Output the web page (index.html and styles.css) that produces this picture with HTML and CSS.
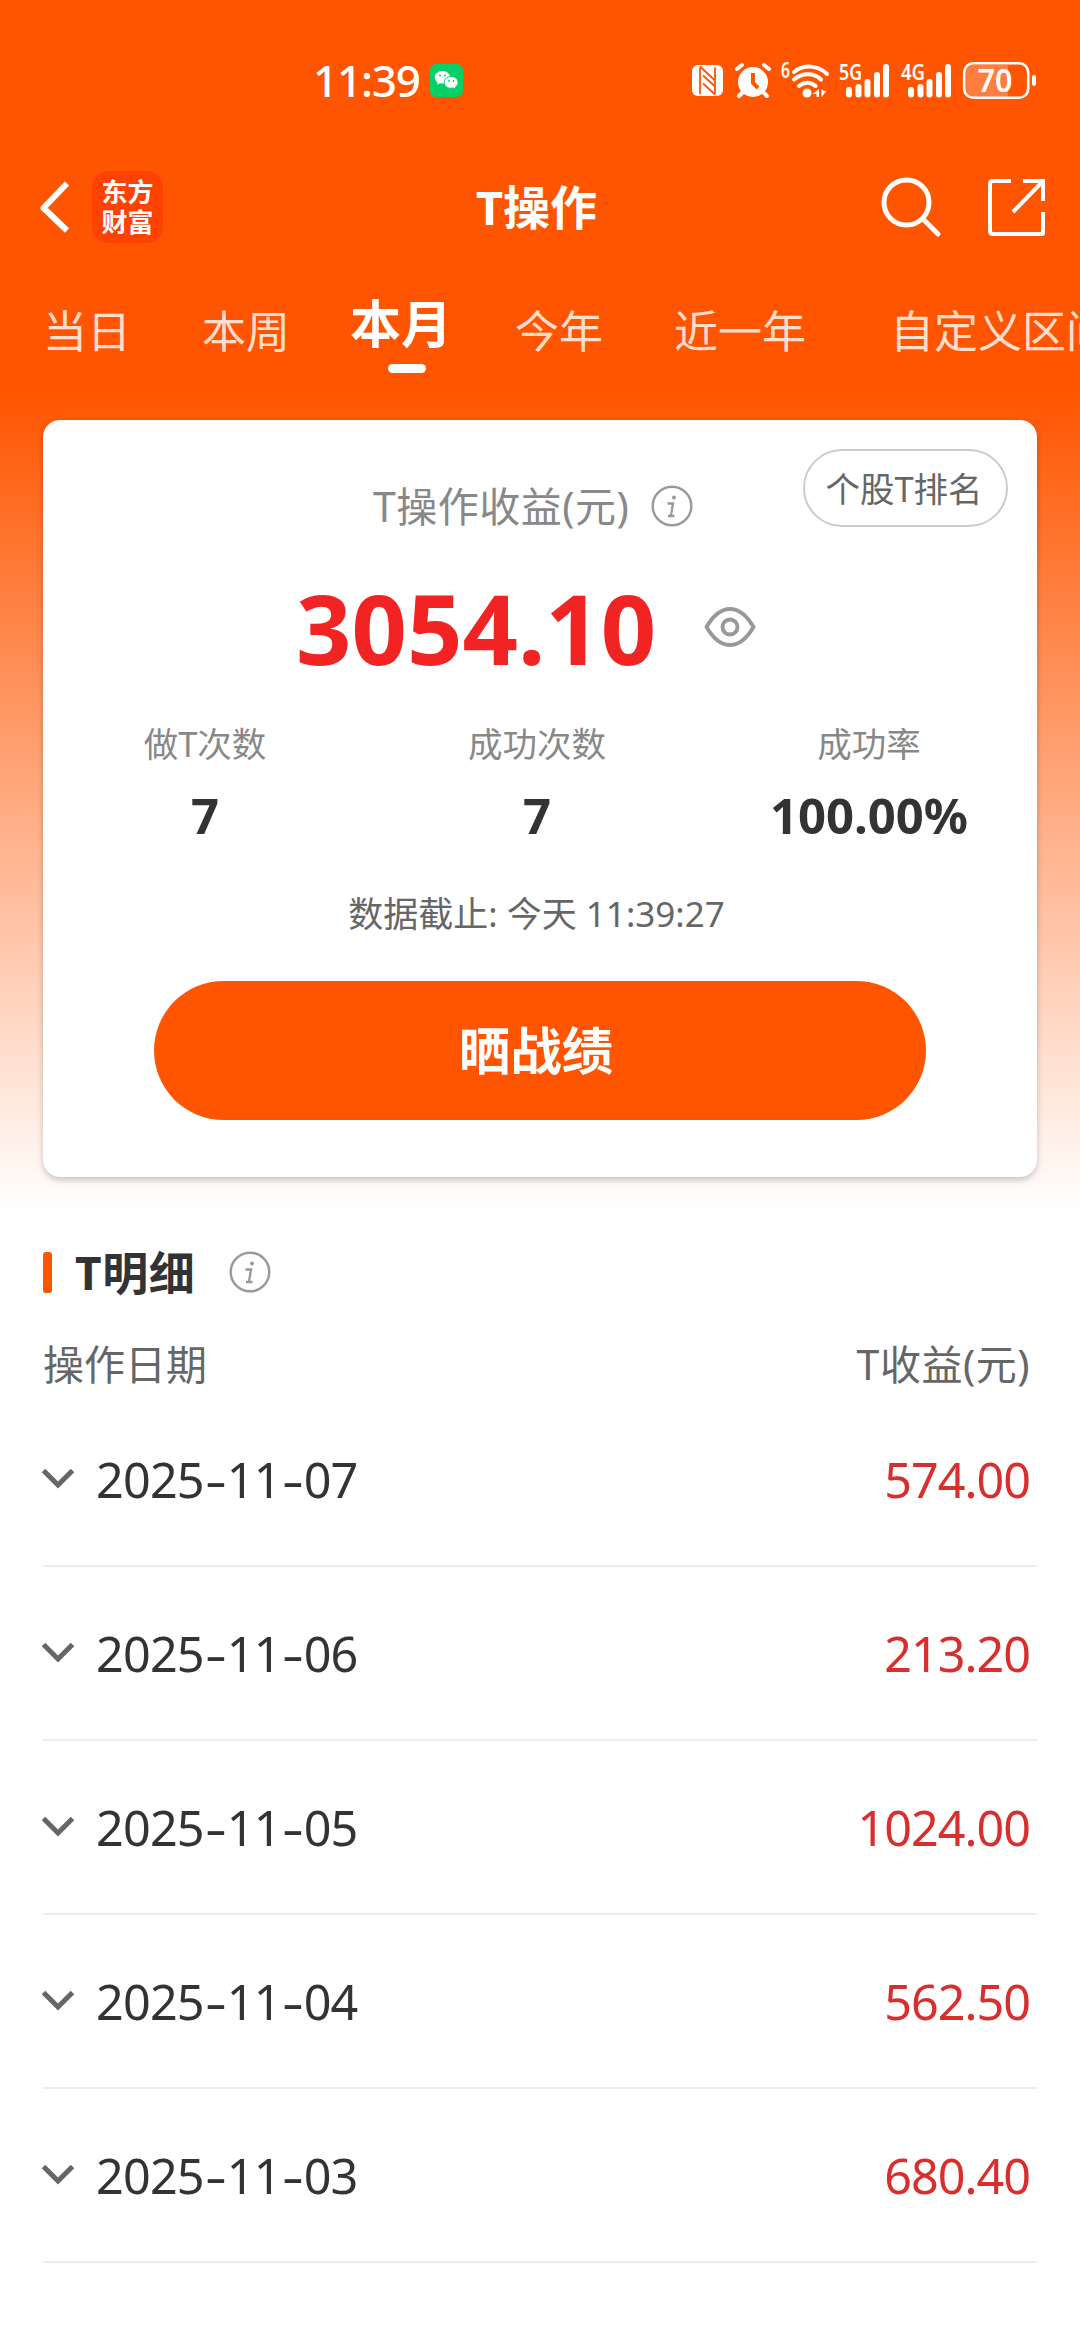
FILE: index.html
```html
<!DOCTYPE html>
<html lang="zh-CN">
<head>
<meta charset="utf-8">
<title>T操作</title>
<link rel="stylesheet" href="styles.css">
</head>
<body>
<div class="screen">
  <div class="status">
    <span class="time">11:39</span>
    <svg class="wechat" viewBox="0 0 33 33" width="33" height="33">
      <rect width="33" height="33" rx="6" fill="#07cf68"/>
      <path d="M12.500 7C8 7 4.800 9.900 4.800 13.400c0 2 1 3.700 2.700 4.900L7 20.800l2.900-1.500c.9.200 1.700.3 2.600.3 4.400 0 7.700-2.800 7.700-6.200S17 7 12.500 7z" fill="#fff"/>
      <path d="M21.200 12.500c-4 0-7 2.600-7 5.900s3 5.900 7 5.900c.8 0 1.600-.1 2.300-.3l2.400 1.200-.5-2.100c1.600-1.100 2.700-2.800 2.700-4.700 0-3.300-3-5.900-6.900-5.900z" fill="#fff" stroke="#07cf68" stroke-width="1"/>
      <g fill="#07cf68"><circle cx="10" cy="11.500" r="1"/><circle cx="15" cy="11.500" r="1"/><circle cx="19" cy="17" r=".9"/><circle cx="23.500" cy="17" r=".9"/></g>
    </svg>
    <svg class="sys" viewBox="0 0 350 40" width="350" height="40">
      <rect x="2" y="4" width="31" height="31" rx="6" fill="#fff"/>
      <g stroke="#ff5500" fill="none" stroke-width="1.800"><path d="M10 6.500V33"/><path d="M25 6.500V33"/><path d="M10 5.500l15 14"/><path d="M13 14.500l12 11"/><path d="M13 22.500l12 11"/></g>
      <circle cx="63" cy="21" r="15" fill="#fff"/>
      <g stroke="#fff" stroke-width="4" stroke-linecap="round"><path d="M47 8l5-4M79 8l-5-4M53 31l-4 4M73 31l4 4"/></g>
      <path d="M63 12v10l5 5" fill="none" stroke="#ff5500" stroke-width="4"/>
      <text x="91" y="17" class="gen" textLength="9" lengthAdjust="spacingAndGlyphs">6</text>
      <g fill="none" stroke="#fff" stroke-width="4" stroke-linecap="round"><path d="M104 11c10-8 24-7 33 2"/><path d="M104 18.500c8-7 20-7 27 0"/><path d="M109 25c5-4.500 12-4.500 16.500 0"/></g>
      <circle cx="117" cy="32" r="4.500" fill="#fff"/>
      <path d="M129 28v8h-2.500v-3h-4zM131.500 28v8l5-6h-2.500z" fill="#fff"/>
      <text x="149" y="19" class="gen" textLength="23" lengthAdjust="spacingAndGlyphs">5G</text>
      <g stroke="#fff" stroke-width="6" stroke-linecap="round"><path d="M159 29v4.500M168.500 26v7.500M177.500 21v12.500M187 14v19.500M196 6v27.500"/></g>
      <text x="211" y="19" class="gen" textLength="24" lengthAdjust="spacingAndGlyphs">4G</text>
      <g stroke="#fff" stroke-width="6" stroke-linecap="round"><path d="M221 29v4.500M230.500 26v7.500M239.500 21v12.500M249 14v19.500M258 6v27.500"/></g>
      <rect x="276" y="4" width="42" height="32" fill="#ff7d3e"/>
      <rect x="274.200" y="2.200" width="64" height="34.600" rx="9" fill="none" stroke="#fff" stroke-width="2.600"/>
      <rect x="342" y="14" width="4" height="11" rx="2" fill="#fff"/>
      <text x="287.500" y="31" class="pct" textLength="35" lengthAdjust="spacingAndGlyphs">70</text>
    </svg>
  </div>

  <div class="nav">
    <svg class="back" viewBox="0 0 32 54" width="32" height="54"><path d="M29 3.500L5.500 28 29 50.500" fill="none" stroke="#fff" stroke-width="6" stroke-linejoin="round"/></svg>
    <div class="logo"><span>东方</span><span>财富</span></div>
    <h1>T操作</h1>
    <svg class="search" viewBox="0 0 62 62" width="62" height="62"><g fill="none" stroke="#fff" stroke-width="5"><circle cx="26.500" cy="26.500" r="22.500"/><path d="M43 43l15 15" stroke-linecap="round"/></g></svg>
    <svg class="share" viewBox="0 0 60 60" width="60" height="60"><g fill="none" stroke="#fff" stroke-width="4"><path d="M25 4H7q-3 0-3 3v47q0 3 3 3h49q1 0 1-1V35"/><path d="M37 4h20v20M57 4L27 35"/></g></svg>
  </div>

  <div class="tabs">
    <span>当日</span><span>本周</span><span class="on">本月</span><span>今年</span><span class="wide">近一年</span><span>自定义区间</span>
  </div>

  <div class="card">
    <div class="rank">个股T排名</div>
    <div class="label"><span>T操作收益(元)</span>
      <svg class="info" viewBox="0 0 42 42" width="42" height="42"><circle cx="21" cy="21" r="19.300" fill="none" stroke="#999" stroke-width="2.400"/><circle cx="23" cy="12.500" r="2" fill="#999"/><path d="M16.500 18.500h5.500l-2 12M17 31h6.500" fill="none" stroke="#999" stroke-width="2.300"/></svg>
    </div>
    <div class="total"><b>3054.10</b>
      <svg viewBox="0 0 52 42" width="52" height="42"><g fill="none" stroke="#999" stroke-width="3.900"><path d="M2.500 21Q13 3 26 3t23.500 18Q39 39 26 39T2.500 21z" stroke-linejoin="round"/><circle cx="26" cy="21" r="7.500"/></g></svg>
    </div>
    <div class="stats">
      <div><span>做T次数</span><b>7</b></div>
      <div><span>成功次数</span><b>7</b></div>
      <div><span>成功率</span><b>100.00%</b></div>
    </div>
    <div class="asof">数据截止: 今天 11:39:27</div>
    <div class="btn">晒战绩</div>
  </div>

  <div class="section"><i></i><h2>T明细</h2>
    <svg class="info" viewBox="0 0 42 42" width="42" height="42"><circle cx="21" cy="21" r="19.300" fill="none" stroke="#999" stroke-width="2.400"/><circle cx="23" cy="12.500" r="2" fill="#999"/><path d="M16.500 18.500h5.500l-2 12M17 31h6.500" fill="none" stroke="#999" stroke-width="2.300"/></svg>
  </div>
  <div class="thead"><span>操作日期</span><span class="gain">T收益(元)</span></div>
  <div class="rows">
    <div class="row"><svg viewBox="0 0 34 24" width="34" height="24"><path d="M2.500 3.500L17 18 31.500 3.500" fill="none" stroke="#666" stroke-width="5"/></svg><span class="date">2025<i>-</i>11<i>-</i>07</span><span class="amt">574.00</span></div>
    <div class="row"><svg viewBox="0 0 34 24" width="34" height="24"><path d="M2.500 3.500L17 18 31.500 3.500" fill="none" stroke="#666" stroke-width="5"/></svg><span class="date">2025<i>-</i>11<i>-</i>06</span><span class="amt">213.20</span></div>
    <div class="row"><svg viewBox="0 0 34 24" width="34" height="24"><path d="M2.500 3.500L17 18 31.500 3.500" fill="none" stroke="#666" stroke-width="5"/></svg><span class="date">2025<i>-</i>11<i>-</i>05</span><span class="amt">1024.00</span></div>
    <div class="row"><svg viewBox="0 0 34 24" width="34" height="24"><path d="M2.500 3.500L17 18 31.500 3.500" fill="none" stroke="#666" stroke-width="5"/></svg><span class="date">2025<i>-</i>11<i>-</i>04</span><span class="amt">562.50</span></div>
    <div class="row"><svg viewBox="0 0 34 24" width="34" height="24"><path d="M2.500 3.500L17 18 31.500 3.500" fill="none" stroke="#666" stroke-width="5"/></svg><span class="date">2025<i>-</i>11<i>-</i>03</span><span class="amt">680.40</span></div>
  </div>
</div>
</body>
</html>
```
FILE: styles.css
```css
* { box-sizing: border-box; margin: 0; padding: 0; }
body { width: 1080px; background: #fff; font-family: "Noto Sans", "Noto Sans CJK SC", sans-serif; color: #333; }
svg { display: block; flex: none; overflow: visible; }
.screen {
  width: 1080px; height: 2340px; overflow: hidden;
  background: linear-gradient(#ff5500 0, #ff5500 390px, #fff 1210px);
}
.status { display: flex; align-items: center; height: 160px; padding-left: 313px; }
.time { width: 117px; font-size: 44px; line-height: 60px; font-weight: 500; color: #fff; white-space: nowrap; letter-spacing: -1.200px; }
.sys { margin-left: 227px; margin-top: 2px; }
.gen { font: 600 21px "Noto Sans", sans-serif; fill: #fff; }
.pct { font: 600 32px "Noto Sans", sans-serif; fill: #fff; }

.nav { display: flex; align-items: center; height: 94px; padding-left: 38px; color: #fff; }
.logo { display: flex; flex-direction: column; justify-content: center; width: 71px; height: 72px; margin-left: 22px; border-radius: 16px; background: #ff4200; text-align: center; font-size: 26px; font-weight: 700; line-height: 30px; }
.nav h1 { width: 122px; margin-left: 313px; font-size: 47px; line-height: 60px; font-weight: 700; white-space: nowrap; }
.search { margin-left: 282px; }
.share { margin-left: 44px; }

.tabs { display: flex; height: 166px; padding: 47px 0 0 43px; color: #ffddcc; font-size: 44px; line-height: 60px; white-space: nowrap; }
.tabs span { flex: none; margin-right: 71px; }
.tabs .wide { margin-right: 84px; }
.tabs .on { position: relative; margin: -8px 63px 0 -11px; color: #fff; font-size: 51px; font-weight: 700; }
.tabs .on::after { content: ""; position: absolute; left: 38px; top: 71px; width: 38px; height: 9px; border-radius: 5px; background: #fff; }

.card { position: relative; width: 994px; height: 757px; margin-left: 43px; padding-top: 56px; border-radius: 17px; background: #fff; box-shadow: 0 3px 6px rgba(0,0,0,.22); }
.rank { position: absolute; right: 29px; top: 29px; width: 205px; height: 78px; padding-right: 3px; border: 2px solid #ccc; border-radius: 39px; text-align: center; font-size: 34.500px; line-height: 75px; color: #666; }
.label { display: flex; align-items: center; height: 60px; padding-left: 330px; font-size: 41px; line-height: 60px; color: #888; white-space: nowrap; letter-spacing: .5px; }
.label .info { margin-left: 22px; }
.total { display: flex; align-items: center; height: 120px; margin-top: 31px; padding-left: 253px; }
.total b { width: 408px; font-size: 97px; line-height: 118px; font-weight: 700; color: #f22323; }
.stats { display: flex; margin: 32px 0 0 -4px; }
.stats div { display: flex; flex-direction: column; align-items: center; width: 332px; }
.stats span { font-size: 34.500px; line-height: 50px; color: #888; }
.stats b { font-size: 49px; line-height: 70px; margin-top: 11px; color: #333; }
.asof { margin: 39px 7px 0 0; text-align: center; font-size: 35px; line-height: 50px; color: #666; }
.btn { width: 772px; height: 139px; margin: 42px auto 0; padding-right: 8px; border-radius: 70px; background: #ff5500; color: #fff; text-align: center; font-size: 51.500px; font-weight: 700; line-height: 138px; }

.section { display: flex; align-items: center; height: 60px; margin: 65px 0 0 43px; }
.section i { width: 9px; height: 41px; border-radius: 3px; background: #ff5500; }
.section h2 { width: 154px; margin-left: 23px; font-size: 46px; line-height: 60px; letter-spacing: .6px; }
.thead { display: flex; justify-content: space-between; padding: 32px 50px 0 43px; font-size: 41px; line-height: 60px; color: #666; }
.gain { letter-spacing: .5px; }
.rows { margin: -1px 43px 0; }
.row { display: flex; align-items: center; height: 174px; border-bottom: 2px solid #ededed; padding-right: 7px; font-size: 48.500px; line-height: 70px; }
.row svg { margin-left: -2px; }
.date { margin-left: 21px; color: #333; letter-spacing: -.8px; }
.date i { display: inline-block; width: 23px; text-align: center; font-style: normal; transform: scaleX(1.4); }
.amt { margin-left: auto; color: #d92e2e; letter-spacing: -1px; }
```
